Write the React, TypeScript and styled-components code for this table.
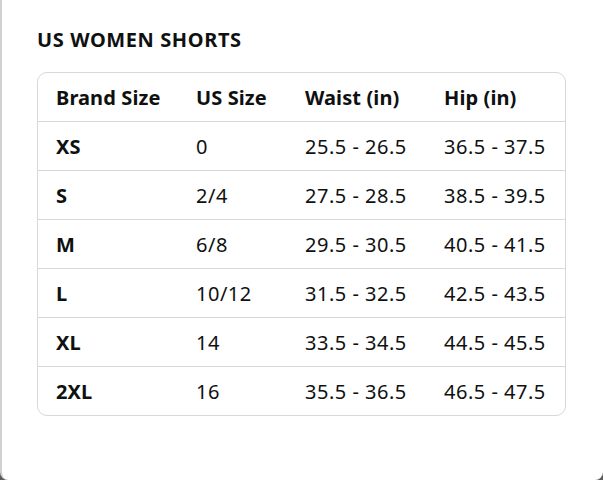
import React from "react";
import styled, { createGlobalStyle } from "styled-components";

const GlobalStyle = createGlobalStyle`
  html, body {
    margin: 0;
    padding: 0;
    height: 100%;
    background: #5c5c5c;
  }
  #root {
    height: 100%;
  }
`;

const rows = [
  ["XS", "0", "25.5 - 26.5", "36.5 - 37.5"],
  ["S", "2/4", "27.5 - 28.5", "38.5 - 39.5"],
  ["M", "6/8", "29.5 - 30.5", "40.5 - 41.5"],
  ["L", "10/12", "31.5 - 32.5", "42.5 - 43.5"],
  ["XL", "14", "33.5 - 34.5", "44.5 - 45.5"],
  ["2XL", "16", "35.5 - 36.5", "46.5 - 47.5"],
];

const headers = ["Brand Size", "US Size", "Waist (in)", "Hip (in)"];
const widths = [140, 109, 139, 141];

const App = () => {
  return (
    <>
      <GlobalStyle />
      <Modal>
        <Title>US WOMEN SHORTS</Title>
        <Card>
          <Table>
            <colgroup>
              {widths.map((w, i) => (
                <col key={i} style={{ width: w }} />
              ))}
            </colgroup>
            <thead>
              <tr>
                {headers.map((h) => (
                  <Cell as="th" key={h} $bold>
                    {h}
                  </Cell>
                ))}
              </tr>
            </thead>
            <tbody>
              {rows.map((r, ri) => (
                <tr key={r[0]}>
                  {r.map((c, ci) => (
                    <Cell key={ci} $bold={ci === 0} $last={ri === rows.length - 1}>
                      {c}
                    </Cell>
                  ))}
                </tr>
              ))}
            </tbody>
          </Table>
        </Card>
      </Modal>
    </>
  );
};

const Modal = styled.div`
  box-sizing: border-box;
  height: 100%;
  background: #fff;
  border-left: 2px solid #cfd2d2;
  border-radius: 0 0 8px 8px;
  padding: 27px 36px 0 35px;
  font-family: "Noto Sans", "Open Sans", sans-serif;
  color: #0f1111;
`;

const Title = styled.h2`
  margin: 0 0 20px;
  font-size: 20px;
  line-height: 25px;
  font-weight: 700;
  letter-spacing: 0.6px;
`;

const Card = styled.div`
  border: 1px solid #d5d9d9;
  border-radius: 10px;
  overflow: hidden;
  width: 529px;
  box-sizing: border-box;
`;

const Table = styled.table`
  width: 100%;
  border-collapse: collapse;
  table-layout: fixed;
`;

const Cell = styled.td<{ $bold?: boolean; $last?: boolean }>`
  height: 48px;
  padding: 0 0 0 18px;
  text-align: left;
  font-size: 20px;
  font-weight: ${(p) => (p.$bold ? 700 : 400)};
  letter-spacing: ${(p) => (p.$bold ? "0.1px" : "0.5px")};
  border-bottom: ${(p) => (p.$last ? "none" : "1px solid #d5d9d9")};
  white-space: nowrap;
  vertical-align: middle;
`;

export default App;
